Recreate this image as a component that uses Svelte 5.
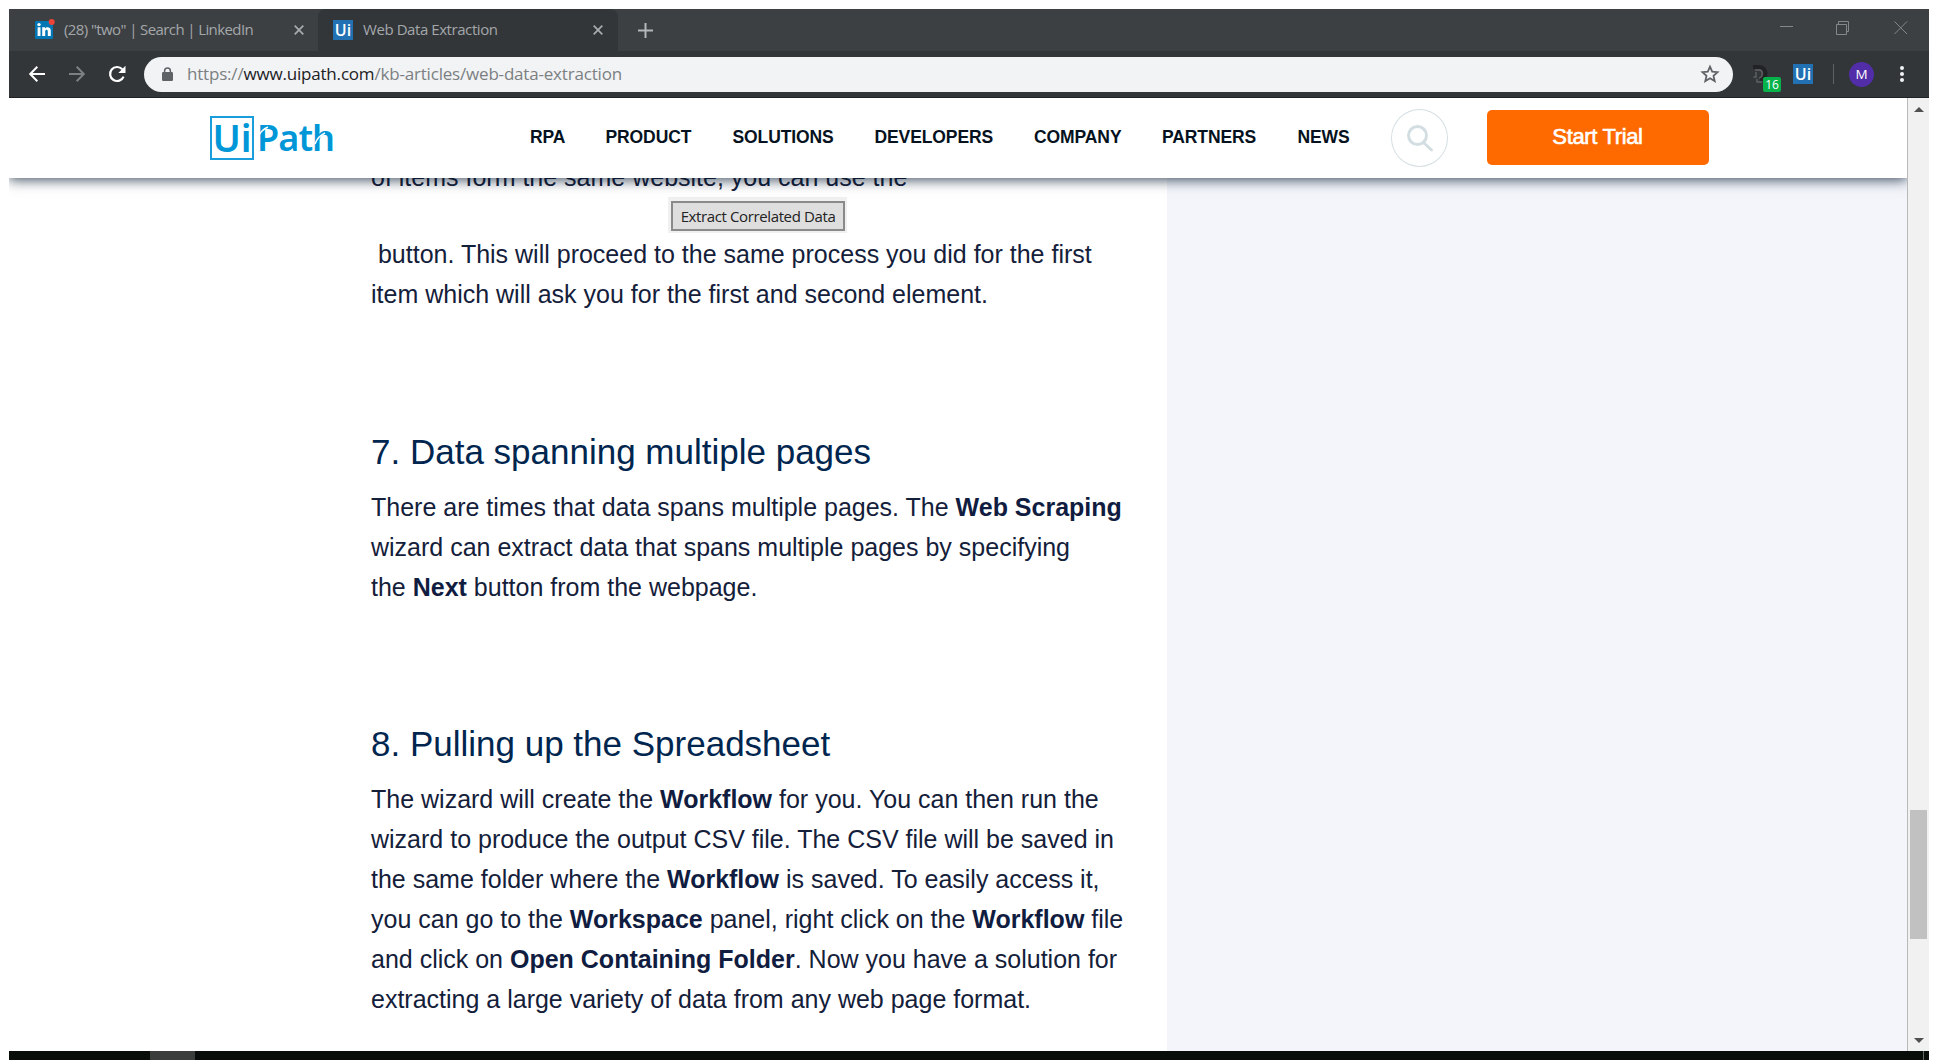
<script>
  const nav = [
    ['RPA', 'rpa'], ['PRODUCT', 'product'], ['SOLUTIONS', 'solutions'], ['DEVELOPERS', 'developers'],
    ['COMPANY', 'company'], ['PARTNERS', 'partners'], ['NEWS', 'news']
  ];
</script>

<div class="window">
  <div class="tabs">
    <div class="tab first">
      <svg class="fav-in" viewBox="0 0 20 20"><rect y="2" width="18" height="18" rx="1" fill="#0077b5" /><g fill="#fff"><rect x="2.600" y="8.300" width="2.900" height="8.700" /><circle cx="4" cy="5.600" r="1.700" /><path d="M7.200 8.300h2.800v1.300c1-2 5.800-2.100 5.800 2.100V17h-3v-4.600c0-2.400-2.600-2.200-2.600 0V17h-3z" /></g><circle cx="16.700" cy="3" r="3" fill="#f04337" /></svg>
      <span class="tab-title t1">(28) "two" | Search | LinkedIn</span>
      <svg class="x" viewBox="0 0 10 10"><path d="M.7.7l8.6 8.6M9.3.7L.7 9.3" /></svg>
    </div>
    <div class="tab active">
      <span class="fav-ui">Ui</span>
      <span class="tab-title t2">Web Data Extraction</span>
      <svg class="x" viewBox="0 0 10 10"><path d="M.7.7l8.6 8.6M9.3.7L.7 9.3" /></svg>
    </div>
    <svg class="plus" viewBox="0 0 15 15"><path d="M7.5 0v15M0 7.5h15" /></svg>
    <svg class="controls" viewBox="0 0 128 14"><path d="M0 5.5h13M56.5 3.5h10v10h-10zM58.5 3.5v-3h10v10h-2M114.500 .5l12.500 12.500M127 .5l-12.500 12.500" /></svg>
  </div>

  <div class="toolbar">
    <svg class="arrow" viewBox="0 0 16 16"><path d="M16 8H1.500M8.300 .8L1.200 8l7.100 7.200" /></svg>
    <svg class="arrow dim" viewBox="0 0 16 16"><path d="M0 8h14.500M7.700 .8L14.800 8l-7.100 7.200" /></svg>
    <svg class="reload" viewBox="0 0 18 18"><path d="M15.600 11.600A7 7 0 1 1 14.300 4.300" fill="none" stroke="#fff" stroke-width="2.200" /><path d="M17.500 .8v7.200h-7.200z" fill="#fff" /></svg>
    <div class="omnibox">
      <svg class="lock" viewBox="0 0 11 14"><path d="M2.600 6V4a2.900 2.900 0 0 1 5.800 0v2" fill="none" stroke="#5f6368" stroke-width="1.500" /><rect y="5" width="11" height="9" rx="1.200" fill="#5f6368" /></svg>
      <span class="url">https://<b>www.uipath.com</b>/kb-articles/web-data-extraction</span>
      <svg class="star" viewBox="0 0 18 18"><path d="M9 1.700l2.200 5 5.300.5-4 3.600 1.200 5.300L9 13.300l-4.700 2.800 1.200-5.300-4-3.600 5.300-.5z" /></svg>
    </div>
    <div class="ext"><svg viewBox="0 0 18 20"><path d="M1 3h6c8 0 9 12 1 12" fill="none" stroke="#202224" stroke-width="4" /><path d="M3 6h4c4 0 4.500 7 0 8M4 8v5H1.500M5 15v3h5" fill="none" stroke="#606264" stroke-width="1.400" /></svg><span>16</span></div>
    <span class="fav-ui ui2">Ui</span>
    <span class="divider"></span>
    <span class="avatar">M</span>
    <svg class="dots" viewBox="0 0 4 16"><circle cx="2" cy="2" r="2" /><circle cx="2" cy="8" r="2" /><circle cx="2" cy="14" r="2" /></svg>
  </div>

  <div class="viewport">
    <div class="page">
      <header>
        <div class="logo"><span class="box">Ui</span><span class="path">Path</span>
          <svg class="cuts" viewBox="0 0 76 32"><path d="M0 14Q3 7 10 4M57 21Q60 13 67 10" /></svg>
        </div>
        <nav>{#each nav as [label, id]}<a href="#{id}" class={id}>{label}</a>{/each}</nav>
        <div class="search"><svg viewBox="0 0 26 26"><circle cx="10.500" cy="10.500" r="9" /><path d="M16.500 17.500l8 7.500" /></svg></div>
        <button class="trial">Start Trial</button>
      </header>
      <div class="content">
        <main>
          <p class="top">of items form the same website, you can use the</p>
          <div class="shot"><span>Extract Correlated Data</span></div>
          <p>&nbsp;button. This will proceed to the same process you did for the first<br />item which will ask you for the first and second element.</p>
          <h2>7. Data spanning multiple pages</h2>
          <p>There are times that data spans multiple pages. The <strong>Web Scraping</strong><br />wizard can extract data that spans multiple pages by specifying<br />the <strong>Next</strong> button from the webpage.</p>
          <h2>8. Pulling up the Spreadsheet</h2>
          <p>The wizard will create the <strong>Workflow</strong> for you. You can then run the<br />wizard to produce the output CSV file. The CSV file will be saved in<br />the same folder where the <strong>Workflow</strong> is saved. To easily access it,<br />you can go to the <strong>Workspace</strong> panel, right click on the <strong>Workflow</strong> file<br />and click on <strong>Open Containing Folder</strong>. Now you have a solution for<br />extracting a large variety of data from any web page format.</p>
        </main>
        <aside></aside>
      </div>
    </div>
    <div class="scrollbar">
      <svg viewBox="0 0 10 5"><path d="M0 5L5 0l5 5z" /></svg>
      <div class="thumb"></div>
      <svg class="down" viewBox="0 0 10 5"><path d="M0 0h10L5 5z" /></svg>
    </div>
  </div>
  <div class="taskbar"><span class="running"></span><span class="peek"></span></div>
</div>

<style>
  :global(body) { background: #fff; overflow: hidden; }
  * { box-sizing: border-box; }
  svg { display: block; flex: none; overflow: visible; }
  .window { width: 1920px; height: 1051px; margin: 9px 0 0 9px; display: flex; flex-direction: column; font-family: 'Liberation Sans', Arial, sans-serif; }
  .tabs { height: 42px; background: #3c4043; display: flex; align-items: center; flex: none; }
  .tab { height: 42px; display: flex; align-items: center; white-space: nowrap; }
  .tab.first { width: 309px; padding: 0 14px 0 26px; }
  .tab.active { width: 300px; padding: 0 15px; background: #323639; border-radius: 8px 8px 0 0; }
  .tab-title { font: 15px/20px 'Open Sans', 'Noto Sans', sans-serif; color: #a4a7aa; flex: 1; padding-bottom: 2px; }
  .t1 { margin-left: 9px; letter-spacing: -0.6px; }
  .t2 { margin-left: 10px; letter-spacing: -0.43px; }
  .x { width: 10px; height: 10px; fill: none; stroke: #a9acae; stroke-width: 1.7; }
  .fav-in { width: 20px; height: 20px; margin-top: -2px; }
  .fav-ui { width: 20px; height: 20px; background: #2271b3; color: #fff; font: 600 16px/20px 'Open Sans', sans-serif; text-align: center; flex: none; }
  .plus { width: 15px; height: 15px; margin-left: 20px; stroke: #b4b6b8; stroke-width: 2; }
  .controls { width: 128px; height: 14px; margin: -5px 21px 0 auto; fill: none; stroke: #85888a; }
  .toolbar { height: 47px; background: #323639; border-bottom: 1px solid #202224; display: flex; align-items: center; flex: none; padding: 0 25px 0 20px; }
  .arrow { width: 16px; height: 16px; margin-right: 24px; fill: none; stroke: #fff; stroke-width: 2; }
  .dim { stroke: #7d8083; margin-right: 23px; }
  .reload { width: 18px; height: 18px; }
  .omnibox { width: 1589px; height: 35px; margin-left: 18px; border-radius: 18px; background: #f1f3f4; display: flex; align-items: center; padding: 0 14px 0 18px; }
  .lock { width: 11px; height: 14px; }
  .url { font: 17px/24px 'Open Sans', 'Noto Sans', sans-serif; letter-spacing: -0.19px; color: #7c7f82; margin: 0 auto 0 14px; white-space: nowrap; }
  .url b { font-weight: 400; color: #202124; }
  .star { width: 18px; height: 18px; fill: none; stroke: #5f6368; stroke-width: 1.8; }
  .ext { width: 29px; height: 28px; margin-left: 19px; position: relative; padding-top: 4px; }
  .ext svg { width: 18px; height: 20px; }
  .ext span { position: absolute; left: 11px; top: 17px; width: 18px; height: 15px; border-radius: 2px; background: #06b34a; color: #fff; font: 12px/16px 'Open Sans', sans-serif; text-align: center; }
  .ui2 { margin-left: 12px; }
  .divider { width: 1px; height: 20px; background: #5f6265; margin-left: 20px; }
  .avatar { width: 25px; height: 25px; border-radius: 50%; background: #512da8; color: #fff; font: 13.5px/25px 'Open Sans', sans-serif; text-align: center; margin-left: 15px; }
  .dots { width: 4px; height: 16px; margin-left: auto; fill: #f1f3f4; }
  .viewport { height: 953px; flex: none; display: flex; }
  .page { width: 1898px; display: flex; flex-direction: column; overflow: hidden; }
  header { height: 80px; flex: none; background: #fff; display: flex; align-items: center; position: relative; box-shadow: 0 2px 12px rgba(0, 22, 45, .75); padding-left: 201px; }
  .logo { width: 320px; display: flex; align-items: center; position: relative; color: #0097d8; font: 600 38px/42px 'Noto Sans', sans-serif; }
  .box { width: 44px; height: 44px; border: 2px solid #1a9edb; text-align: center; line-height: 39px; }
  .path { margin-left: 3px; padding-bottom: 1px; letter-spacing: -0.9px; font-size: 36px; }
  .cuts { position: absolute; left: 48px; top: 7px; width: 76px; height: 32px; fill: none; stroke: #fff; stroke-width: 1.5; }
  nav { display: flex; width: 861px; height: 22px; font: bold 17.5px/20px 'Liberation Sans', Arial, sans-serif; }
  nav a { color: #061220; text-decoration: none; letter-spacing: -0.1px; white-space: nowrap; }
  .rpa { width: 75.5px; } .product { width: 127px; } .solutions { width: 142px; } .developers { width: 159.5px; }
  .company { width: 128px; } .partners { width: 135.5px; }
  .search { width: 57px; height: 58px; border: 1px solid #d5dfe3; border-radius: 50%; padding: 15px; }
  .search svg { width: 26px; height: 26px; fill: none; stroke: #d3dee2; stroke-width: 3; stroke-linecap: round; }
  .trial { width: 222px; height: 55px; margin: -2px 0 0 39px; border: 0; border-radius: 5px; background: #ff6a00; color: #fff; font: 22px/54px 'Liberation Sans', Arial, sans-serif; letter-spacing: -0.35px; -webkit-text-stroke: .6px #fff; padding: 0 1px 1px 0; }
  .content { flex: 1; display: flex; }
  main { width: 1158px; padding-left: 362px; }
  aside { flex: 1; background: #f3f5fb; }
  p { margin: 0; font-size: 25px; line-height: 40px; color: #14203a; white-space: nowrap; }
  .top { margin-top: -21px; }
  strong { color: #101c40; }
  .shot { width: 179px; height: 36px; margin: 0 0 1px 297px; background: #f0f0f0; padding: 4px 2px 2px 3px; }
  .shot span { display: block; height: 30px; border: 2px solid #8a8a8a; background: #dedede; color: #222; font: 15px/27px 'Open Sans', sans-serif; text-align: center; letter-spacing: -0.38px; white-space: nowrap; }
  h2 { margin: 0; font-size: 35px; line-height: 50px; font-weight: 400; color: #00264f; white-space: nowrap; padding: 112.5px 0 10px; }
  .scrollbar { width: 22px; background: #f1f1f1; border-left: 1px solid #b9b9b9; display: flex; flex-direction: column; align-items: center; padding: 9px 2px 8px; }
  .scrollbar svg { width: 10px; height: 5px; fill: #505050; }
  .thumb { width: 17px; height: 129px; margin-top: 698px; background: #c1c1c1; }
  .down { margin-top: auto; }
  .taskbar { height: 9px; flex: none; background: #080d09; display: flex; justify-content: space-between; padding: 0 5px 0 141px; }
  .running { width: 45px; background: #3b3d3c; }
  .peek { width: 1px; background: #666a67; }
</style>
